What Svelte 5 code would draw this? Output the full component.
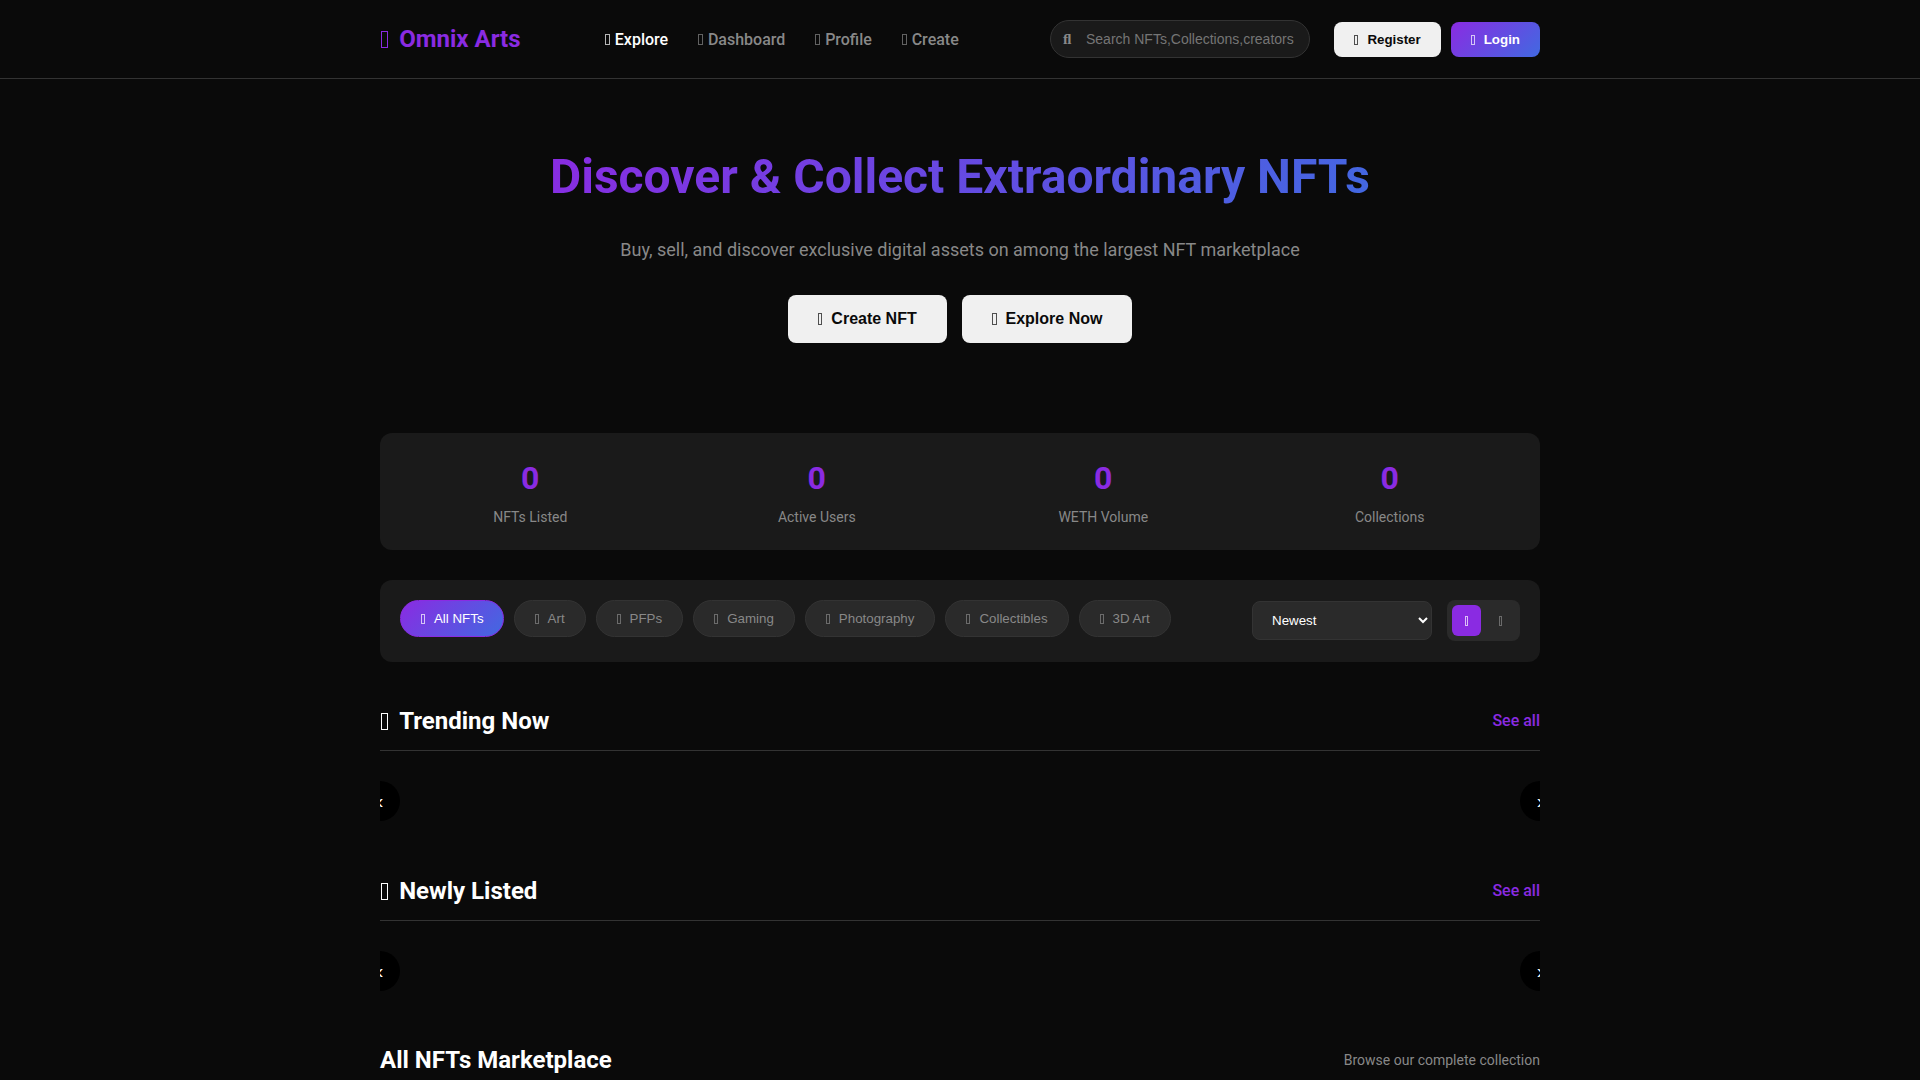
<script>
  const navLinks = [
    { label: 'Explore', active: true },
    { label: 'Dashboard' },
    { label: 'Profile' },
    { label: 'Create' }
  ];
  const stats = ['NFTs Listed', 'Active Users', 'WETH Volume', 'Collections'];
  const cats = ['All NFTs', 'Art', 'PFPs', 'Gaming', 'Photography', 'Collectibles', '3D Art'];
  const rows = ['Trending Now', 'Newly Listed'];
</script>

<div class="page">
  <header class="top">
    <div class="wrap bar">
      <a class="logo" href="#top"><span class="ico wide"></span>Omnix Arts</a>
      <nav class="links">
        {#each navLinks as l}
          <a class="link" class:on={l.active} href="#top"><span class="ico tight"></span>{l.label}</a>
        {/each}
      </nav>
      <div class="search">
        <span class="sicon">ﬂ</span>
        <input class="sinput" placeholder="Search NFTs,Collections,creators" />
      </div>
      <div class="auth">
        <button class="btn light"><span class="ico"></span>Register</button>
        <button class="btn grad"><span class="ico"></span>Login</button>
      </div>
    </div>
  </header>

  <section class="hero">
    <h1>Discover &amp; Collect Extraordinary NFTs</h1>
    <p>Buy, sell, and discover exclusive digital assets on among the largest NFT marketplace</p>
    <div class="cta">
      <button class="big"><span class="ico"></span>Create NFT</button>
      <button class="big"><span class="ico"></span>Explore Now</button>
    </div>
  </section>

  <main class="wrap">
    <section class="stats">
      {#each stats as s}
        <div class="stat">
          <div class="num">0</div>
          <div class="lab">{s}</div>
        </div>
      {/each}
    </section>

    <section class="filters">
      <div class="pills">
        {#each cats as c, i}
          <button class="pill" class:sel={i === 0}><span class="ico"></span>{c}</button>
        {/each}
      </div>
      <div class="tools">
        <select class="sort">
          <option>Newest</option>
        </select>
        <div class="view">
          <button class="vbtn act"><span class="ico solo"></span></button>
          <button class="vbtn"><span class="ico solo"></span></button>
        </div>
      </div>
    </section>

    {#each rows as r}
      <section class="row">
        <div class="rowhead">
          <h2><span class="ico wide"></span>{r}</h2>
          <a class="see" href="#top">See all</a>
        </div>
        <div class="carousel">
          <button class="arrow prev">‹</button>
          <button class="arrow next">›</button>
        </div>
      </section>
    {/each}

    <div class="market">
      <h2>All NFTs Marketplace</h2>
      <span class="browse">Browse our complete collection</span>
    </div>
  </main>
</div>

<style>
  :global(body) {
    margin: 0;
    background: #0a0a0a;
  }
  .page {
    height: 1080px;
    overflow: hidden;
    background: #0a0a0a;
    color: #fff;
    font-family: Roboto, sans-serif;
  }
  .wrap {
    width: 1160px;
    margin: 0 auto;
  }
  .top {
    height: 78px;
    border-bottom: 1px solid #333;
  }
  .bar {
    height: 78px;
    display: flex;
    align-items: center;
  }
  .ico {
    display: inline-block;
    box-sizing: border-box;
    width: 0.3em;
    height: 0.72em;
    margin-right: 9px;
    border: 1px solid currentColor;
    opacity: 0.7;
    vertical-align: -0.06em;
  }
  .ico.wide {
    margin-left: 1px;
    margin-right: 11px;
    opacity: 1;
  }
  .ico.tight {
    margin-right: 5px;
  }
  .ico.solo {
    margin-right: 0;
  }
  .logo {
    flex: none;
    width: 225px;
    color: #8a2be2;
    font-size: 24px;
    font-weight: 700;
    text-decoration: none;
  }
  .links {
    flex: none;
    width: 445px;
    display: flex;
    gap: 30px;
  }
  .link {
    color: #888;
    font-size: 16px;
    font-weight: 500;
    text-decoration: none;
  }
  .link.on {
    color: #fff;
  }
  .search {
    flex: none;
    width: 260px;
    height: 38px;
    box-sizing: border-box;
    border: 1px solid #333;
    border-radius: 25px;
    background: #1a1a1a;
    display: flex;
    align-items: center;
    padding-left: 12px;
  }
  .sicon {
    width: 23px;
    color: #888;
    font-size: 15px;
    font-family: "Liberation Serif", serif;
    font-weight: 700;
  }
  .sinput {
    flex: 1;
    min-width: 0;
    border: 0;
    padding: 0;
    outline: 0;
    background: transparent;
    color: #fff;
    font: 14px "Liberation Sans", sans-serif;
  }
  .sinput::placeholder {
    color: #757575;
  }
  .auth {
    flex: none;
    margin-left: auto;
    display: flex;
    gap: 10px;
    margin-top: 1px;
  }
  .btn {
    flex: none;
    height: 35px;
    padding: 0 20px;
    border: 0;
    border-radius: 8px;
    white-space: nowrap;
    font: 700 13.33px "Liberation Sans", sans-serif;
  }
  .light {
    background: #f0f0f0;
    color: #0a0a0a;
  }
  .grad,
  .pill.sel {
    background: linear-gradient(135deg, #8a2be2, #4169e1);
    color: #fff;
  }
  .hero {
    height: 354px;
    box-sizing: border-box;
    padding-top: 67px;
    text-align: center;
  }
  h1 {
    margin: 0;
    font-size: 48px;
    line-height: 62px;
    font-weight: 700;
    width: max-content;
    margin-inline: auto;
    background: linear-gradient(135deg, #8a2be2, #4169e1);
    -webkit-background-clip: text;
    background-clip: text;
    color: transparent;
  }
  .hero p {
    margin: 27px 0 0;
    color: #888;
    font-size: 18px;
    line-height: 30px;
  }
  .cta {
    margin-top: 30px;
    display: flex;
    justify-content: center;
    gap: 15px;
  }
  .big {
    height: 48px;
    padding: 0 30px;
    border: 0;
    border-radius: 8px;
    background: #f0f0f0;
    color: #0a0a0a;
    font: 700 16px "Liberation Sans", sans-serif;
  }
  .stats {
    height: 117px;
    border-radius: 12px;
    background: #1a1a1a;
    display: grid;
    grid-template-columns: repeat(4, 1fr);
    gap: 26px;
    box-sizing: border-box;
    padding: 0 20px;
    align-items: center;
    text-align: center;
  }
  .num {
    color: #8a2be2;
    font-size: 32px;
    font-weight: 700;
    line-height: 42px;
  }
  .lab {
    margin-top: 8px;
    color: #888;
    font-size: 14px;
    line-height: 20px;
  }
  .filters {
    margin-top: 30px;
    margin-bottom: 43px;
    height: 82px;
    box-sizing: border-box;
    padding: 20px;
    border-radius: 12px;
    background: #1a1a1a;
    display: flex;
    justify-content: space-between;
    align-items: flex-start;
  }
  .pills {
    display: flex;
    gap: 10px;
  }
  .pill {
    height: 37px;
    padding: 0 20px;
    border: 1px solid #333;
    border-radius: 20px;
    background: #2a2a2a;
    color: #888;
    font: 13.33px "Liberation Sans", sans-serif;
  }
  .pill.sel {
    padding-right: 19px;
    border-color: #8a2be2;
  }
  .tools {
    display: flex;
    align-items: center;
    gap: 15px;
  }
  .sort {
    width: 180px;
    height: 39px;
    padding: 0 15px;
    border: 1px solid #333;
    border-radius: 8px;
    background: #2a2a2a;
    color: #fff;
    font: 13.33px "Liberation Sans", sans-serif;
  }
  .view {
    display: flex;
    gap: 5px;
    padding: 5px;
    border-radius: 8px;
    background: #2a2a2a;
  }
  .vbtn {
    width: 29px;
    height: 31px;
    padding: 0;
    border: 0;
    border-radius: 6px;
    background: transparent;
    color: #888;
    font: 13.33px "Liberation Sans", sans-serif;
  }
  .vbtn.act {
    background: #8a2be2;
    color: #fff;
  }
  .rowhead {
    display: flex;
    justify-content: space-between;
    align-items: center;
    height: 32px;
    padding-bottom: 13px;
    border-bottom: 1px solid #333;
  }
  h2 {
    margin: 0;
    font-size: 24px;
    font-weight: 700;
  }
  .see {
    color: #8a2be2;
    font-size: 16px;
    font-weight: 500;
    text-decoration: none;
    margin-bottom: 2px;
  }
  .carousel {
    position: relative;
    overflow: hidden;
    height: 124px;
  }
  .arrow {
    position: absolute;
    top: 30px;
    width: 40px;
    height: 40px;
    padding: 0;
    border: 0;
    border-radius: 50%;
    background: #000;
    color: #fff;
    font: 20px "Liberation Sans", sans-serif;
  }
  .prev {
    left: -20px;
  }
  .next {
    right: -20px;
  }
  .market {
    display: flex;
    justify-content: space-between;
    align-items: center;
    margin-top: 1px;
  }
  .browse {
    color: #888;
    font-size: 14px;
  }
</style>
